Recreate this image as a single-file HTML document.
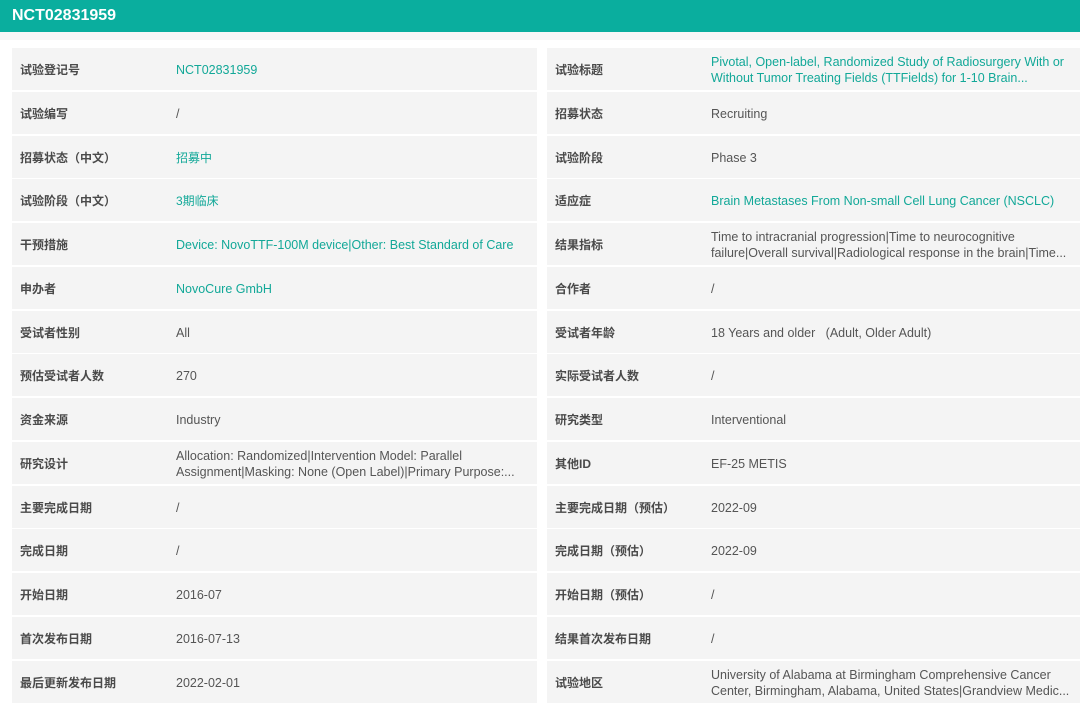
<!DOCTYPE html>
<html><head><meta charset="utf-8"><style>
*{margin:0;padding:0;box-sizing:border-box}
body{width:1080px;height:698px;overflow:hidden;background:#fff;font-family:"Liberation Sans","Noto Sans CJK SC",sans-serif;position:relative}
.hd{position:absolute;left:0;top:0;width:1080px;height:32px;background:#0aae9e;color:#fff;font-weight:bold;font-size:16px;line-height:32px;padding-left:12px}
.strip{position:absolute;left:0;top:32px;width:1080px;height:8px;background:#f7f7f7}
.r{position:absolute;height:42px;background:#f4f4f4;font-size:12px}
.L{left:12px;width:525px}.R{left:547px;width:533px}
.k{position:absolute;left:8px;top:1px;height:42px;display:flex;align-items:center;font-weight:bold;color:#4a4a4a;line-height:16px}
.v{position:absolute;left:164px;right:8px;top:1px;height:42px;display:flex;align-items:center;color:#555;line-height:16px;font-size:12.5px}
.g{color:#12a898}
.cn{font-size:12px}
</style></head><body>
<div class="hd">NCT02831959</div><div class="strip"></div>
<div id="c"></div>
<script>
var L=[["试验登记号","NCT02831959",1],["试验编写","/"],["招募状态（中文）","<span class=cn>招募中</span>",1],["试验阶段（中文）","<span class=cn>3期临床</span>",1],["干预措施","Device: NovoTTF-100M device|Other: Best Standard of Care",1],["申办者","NovoCure GmbH",1],["受试者性别","All"],["预估受试者人数","270"],["资金来源","Industry"],["研究设计","Allocation: Randomized|Intervention Model: Parallel Assignment|Masking: None (Open Label)|Primary Purpose:..."],["主要完成日期","/"],["完成日期","/"],["开始日期","2016-07"],["首次发布日期","2016-07-13"],["最后更新发布日期","2022-02-01"]];
var R=[["试验标题","Pivotal, Open-label, Randomized Study of Radiosurgery With or Without Tumor Treating Fields (TTFields) for 1-10 Brain...",1],["招募状态","Recruiting"],["试验阶段","Phase 3"],["适应症","Brain Metastases From Non-small Cell Lung Cancer (NSCLC)",1],["结果指标","Time to intracranial progression|Time to neurocognitive failure|Overall survival|Radiological response in the brain|Time..."],["合作者","/"],["受试者年龄","18 Years and older &nbsp; (Adult, Older Adult)"],["实际受试者人数","/"],["研究类型","Interventional"],["其他ID","EF-25 METIS"],["主要完成日期（预估）","2022-09"],["完成日期（预估）","2022-09"],["开始日期（预估）","/"],["结果首次发布日期","/"],["试验地区","University of Alabama at Birmingham Comprehensive Cancer Center, Birmingham, Alabama, United States|Grandview Medic..."]];
var h="";
for(var i=0;i<15;i++){var t=(48+i*43.75).toFixed(1);
[[L,"L"],[R,"R"]].forEach(function(p){var d=p[0][i];h+='<div class="r '+p[1]+'" style="top:'+t+'px"><div class="k">'+d[0]+'</div><div class="v'+(d[2]?' g':'')+'"><span>'+d[1]+'</span></div></div>';});}
document.getElementById("c").innerHTML=h;
</script>
</body></html>
